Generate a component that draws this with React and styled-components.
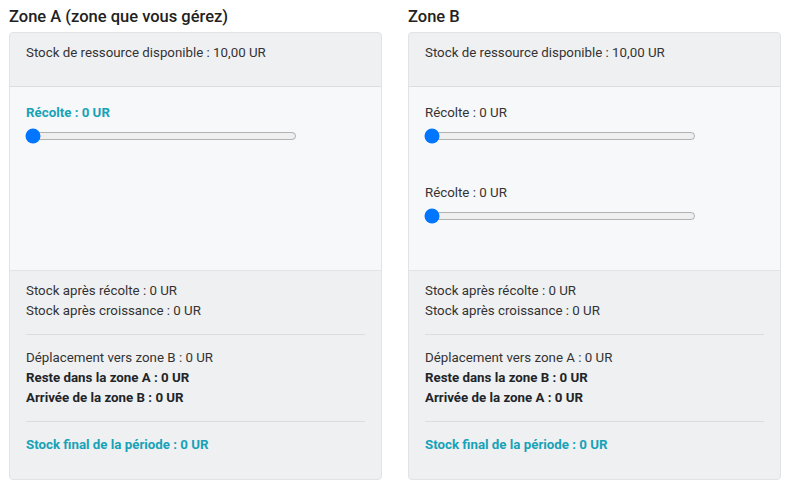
import React from 'react';
import styled, { createGlobalStyle } from 'styled-components';

const GlobalStyle = createGlobalStyle`
  html, body {
    margin: 0;
    background: #ffffff;
    font-family: Roboto, "Liberation Sans", sans-serif;
    color: #2b2b2b;
  }
`;

const Page = styled.div`
  display: grid;
  grid-template-columns: 373px 373px;
  column-gap: 26px;
  padding: 7px 8px 7px 9px;
`;

const Zone = styled.section`
  display: flex;
  flex-direction: column;
`;

const Title = styled.h2`
  margin: 0 0 5px;
  font-size: 16.5px;
  line-height: 20px;
  font-weight: 500;
  color: #222;
`;

const Card = styled.div`
  flex: 1;
  display: flex;
  flex-direction: column;
  border: 1px solid #e2e3e5;
  border-radius: 4px;
  background: #eff0f2;
  overflow: hidden;
`;

const Header = styled.div`
  padding: 10px 16px 23px;
  border-bottom: 1px solid #dcdde0;
`;

const Sliders = styled.div`
  flex: 1;
  display: flex;
  flex-direction: column;
  gap: 39px;
  padding: 16px 16px 46px;
  background: #f7f8fa;
  border-bottom: 1px solid #e3e4e6;
`;

const Footer = styled.div`
  padding: 10px 16px 24px;
`;

const Line = styled.div`
  font-size: 13.3px;
  line-height: 20px;
  font-weight: ${(p) => (p.$bold || p.$accent ? 700 : 400)};
  color: ${(p) => (p.$accent ? '#17a2b8' : p.$bold ? '#212529' : '#333')};
`;

const Divider = styled.hr`
  margin: 13px 0;
  border: 0;
  border-top: 1px solid #dcdde0;
`;

const Field = styled.div`
  display: flex;
  flex-direction: column;
`;

const Range = styled.input`
  display: block;
  width: 272px;
  height: 16px;
  margin: 5px 0 0 -1px;
`;

function Harvest({ accent }) {
  return (
    <Field>
      <Line $accent={accent}>Récolte : 0 UR</Line>
      <Range type="range" min="0" max="10" step="0.1" defaultValue="0" />
    </Field>
  );
}

function ZonePanel({ title, own, other, harvests }) {
  return (
    <Zone>
      <Title>{title}</Title>
      <Card>
        <Header>
          <Line>Stock de ressource disponible : 10,00 UR</Line>
        </Header>
        <Sliders>
          {harvests.map((accent, i) => (
            <Harvest key={i} accent={accent} />
          ))}
        </Sliders>
        <Footer>
          <Line>Stock après récolte : 0 UR</Line>
          <Line>Stock après croissance : 0 UR</Line>
          <Divider />
          <Line>Déplacement vers zone {other} : 0 UR</Line>
          <Line $bold>Reste dans la zone {own} : 0 UR</Line>
          <Line $bold>Arrivée de la zone {other} : 0 UR</Line>
          <Divider />
          <Line $accent>Stock final de la période : 0 UR</Line>
        </Footer>
      </Card>
    </Zone>
  );
}

export default function App() {
  return (
    <>
      <GlobalStyle />
      <Page>
        <ZonePanel title="Zone A (zone que vous gérez)" own="A" other="B" harvests={[true]} />
        <ZonePanel title="Zone B" own="B" other="A" harvests={[false, false]} />
      </Page>
    </>
  );
}
